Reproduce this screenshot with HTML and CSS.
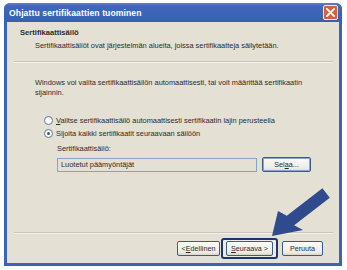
FILE: index.html
```html
<!DOCTYPE html>
<html>
<head>
<meta charset="utf-8">
<link rel="stylesheet" href="styles.css">
</head>
<body>
<div class="window">
  <div class="titlebar">
    <span class="title">Ohjattu sertifikaattien tuominen</span>
    <span class="close"><svg width="9" height="9" viewBox="0 0 9 9"><path d="M1 1L8 8M8 1L1 8" stroke="#fff" stroke-width="1.8" stroke-linecap="square"/></svg></span>
  </div>
  <div class="content">
    <div class="header">
      <div class="h-title">Sertifikaattisäilö</div>
      <div class="h-sub">Sertifikaattisäilöt ovat järjestelmän alueita, joissa sertifikaatteja säilytetään.</div>
    </div>
    <div class="sep"></div>
    <div class="main">
      <p class="intro">Windows voi valita sertifikaattisäilön automaattisesti, tai voit määrittää sertifikaatin sijainnin.</p>
      <div class="radios">
        <div class="radio-row"><span class="radio"></span><span><u>V</u>alitse sertifikaattisäilö automaattisesti sertifikaatin lajin perusteella</span></div>
        <div class="radio-row"><span class="radio checked"></span><span>Sijoita kaikki sertifikaatit seuraavaan säilöön</span></div>
      </div>
      <div class="store">
        <div class="label">Sertifikaattisäilö:</div>
        <div class="store-row">
          <div class="field">Luotetut päämyöntäjät</div>
          <span class="btn selaa">Sel<u>a</u>a...</span>
        </div>
      </div>
    </div>
    <div class="sep"></div>
    <div class="footer">
      <span class="btn edellinen">&lt; <u>E</u>dellinen</span>
      <span class="focus"><span class="btn seuraava"><u>S</u>euraava &gt;</span></span>
      <span class="btn peruuta">Peruuta</span>
    </div>
  </div>
  <svg class="arrow" width="347" height="270" viewBox="0 0 347 270">
    <polygon points="272,236 278,211 286.8,215.8 322.4,188.3 329.8,197.7 294.2,225.2 303,230" fill="#2f4b8e"/>
  </svg>
</div>
</body>
</html>
```
FILE: styles.css
```css
* { box-sizing: border-box; }
html, body { margin: 0; padding: 0; background: #ffffff; }
body { width: 347px; height: 270px; overflow: hidden; font-family: "Liberation Sans", Arial, sans-serif; color: #2b2b2b; }

.window {
  margin: 3px 0 0 4px;
  width: 338px;
  height: 263px;
  background: #3b63b6;
  border-radius: 6px 6px 0 0;
  padding: 0 3px 3px 3px;
  display: flex;
  flex-direction: column;
}
.titlebar {
  height: 19px;
  display: flex;
  align-items: center;
  justify-content: space-between;
  background: linear-gradient(#5b83d2 0px, #3f68bb 3px, #3b63b6 70%, #3a5fae 100%);
  margin: 0 -3px;
  padding-left: 5px;
  padding-right: 4px;
  border-radius: 6px 6px 0 0;
}
.title { color: #fff; font-weight: bold; font-size: 8.6px; letter-spacing: 0.1px; }
.close {
  width: 15px; height: 15px;
  background: #d4603f;
  border: 1px solid #f0e8e6;
  border-radius: 2px;
  display: flex; align-items: center; justify-content: center;
}
.content {
  flex: 1;
  background: #e4e0d4;
  display: flex;
  flex-direction: column;
  font-size: 7.4px;
}
.header { padding: 6px 0 0 13px; height: 39px; }
.h-title { font-weight: bold; font-size: 7.6px; line-height: 10px; }
.h-sub { line-height: 10px; margin-top: 3px; padding-left: 15px; }
.sep { height: 2px; margin: 0 6px 0 7px; border-top: 1px solid #c9c5b8; border-bottom: 1px solid #f4f2ec; }
.main { flex: 1; padding-left: 28px; }
.intro { margin: 15px 0 0 0; line-height: 10px; width: 276px; }
.radios { margin-top: 16px; padding-left: 9px; }
.radio-row { display: flex; align-items: center; height: 13px; gap: 3px; }
.radio {
  width: 9px; height: 9px; border-radius: 50%;
  border: 1px solid #5a76a8; background: #fbfbf8;
  display: flex; align-items: center; justify-content: center;
}
.radio.checked::after { content: ""; width: 3px; height: 3px; border-radius: 50%; background: #4a5a4a; }
.store { padding-left: 22px; margin-top: 4px; }
.label { line-height: 10px; }
.store-row { display: flex; align-items: center; gap: 5px; margin-top: 3px; }
.field {
  width: 200px; height: 14px;
  border: 1px solid #88a2c4;
  padding-left: 3px;
  display: flex; align-items: center;
}
.btn {
  display: inline-flex; align-items: center; justify-content: center;
  height: 15px;
  border: 1px solid #3d5a8f;
  border-radius: 2px;
  background: linear-gradient(#fdfdfb, #ecebe4 80%, #d8d5c9);
  font-size: 7.2px;
}
.selaa { width: 49px; box-shadow: inset 0 0 0 1px #8aa6d8; }
.footer { height: 29px; display: flex; align-items: center; padding-left: 170px; }
.edellinen { width: 43px; }
.focus {
  margin-left: 1px;
  border: 2px solid #1f356e;
  border-radius: 3px;
  padding: 1px 3px;
  background: #eeebe2;
  display: flex;
}
.seuraava { width: 47px; }
.peruuta { width: 41px; margin-left: 4px; }
.arrow { position: absolute; left: 0; top: 0; pointer-events: none; }
```
